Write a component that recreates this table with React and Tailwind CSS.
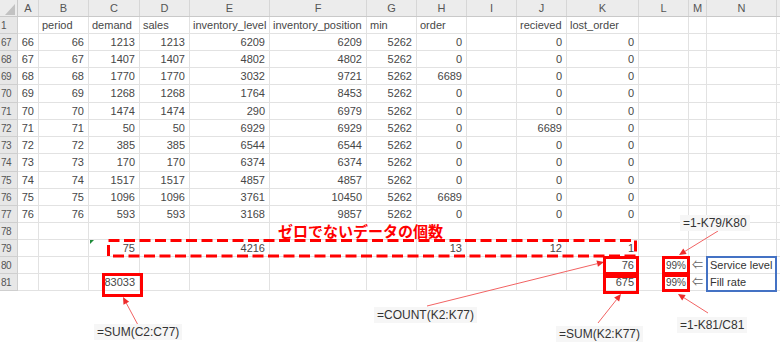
import clsx from 'clsx'

const COLS = [
  { key: 'A', w: 'w-[21px]' },
  { key: 'B', w: 'w-[50px]' },
  { key: 'C', w: 'w-[51px]' },
  { key: 'D', w: 'w-[50px]' },
  { key: 'E', w: 'w-[80px]' },
  { key: 'F', w: 'w-[97px]' },
  { key: 'G', w: 'w-[50px]' },
  { key: 'H', w: 'w-[50px]' },
  { key: 'I', w: 'w-[50px]' },
  { key: 'J', w: 'w-[50px]' },
  { key: 'K', w: 'w-[72px]' },
  { key: 'L', w: 'w-[50px]' },
  { key: 'M', w: 'w-[18px]' },
  { key: 'N', w: 'w-[70px]' },
]

const ROWS = [
  { n: 1, h: 'h-[17px]', c: ['', 'period', 'demand', 'sales', 'inventory_level', 'inventory_position', 'min', 'order', '', 'recieved', 'lost_order', '', '', ''] },
  { n: 67, h: 'h-[17px]', c: [66, 66, 1213, 1213, 6209, 6209, 5262, 0, '', 0, 0, '', '', ''] },
  { n: 68, h: 'h-[17px]', c: [67, 67, 1407, 1407, 4802, 4802, 5262, 0, '', 0, 0, '', '', ''] },
  { n: 69, h: 'h-[17px]', c: [68, 68, 1770, 1770, 3032, 9721, 5262, 6689, '', 0, 0, '', '', ''] },
  { n: 70, h: 'h-[18px]', c: [69, 69, 1268, 1268, 1764, 8453, 5262, 0, '', 0, 0, '', '', ''] },
  { n: 71, h: 'h-[17px]', c: [70, 70, 1474, 1474, 290, 6979, 5262, 0, '', 0, 0, '', '', ''] },
  { n: 72, h: 'h-[17px]', c: [71, 71, 50, 50, 6929, 6929, 5262, 0, '', 6689, 0, '', '', ''] },
  { n: 73, h: 'h-[17px]', c: [72, 72, 385, 385, 6544, 6544, 5262, 0, '', 0, 0, '', '', ''] },
  { n: 74, h: 'h-[18px]', c: [73, 73, 170, 170, 6374, 6374, 5262, 0, '', 0, 0, '', '', ''] },
  { n: 75, h: 'h-[17px]', c: [74, 74, 1517, 1517, 4857, 4857, 5262, 0, '', 0, 0, '', '', ''] },
  { n: 76, h: 'h-[17px]', c: [75, 75, 1096, 1096, 3761, 10450, 5262, 6689, '', 0, 0, '', '', ''] },
  { n: 77, h: 'h-[17px]', c: [76, 76, 593, 593, 3168, 9857, 5262, 0, '', 0, 0, '', '', ''] },
  { n: 78, h: 'h-[17px]', c: ['', '', '', '', '', '', '', '', '', '', '', '', '', ''] },
  { n: 79, h: 'h-[17px]', c: ['', '', 75, '', 4216, '', '', 13, '', 12, 1, '', '', ''] },
  { n: 80, h: 'h-[17px]', c: ['', '', '', '', '', '', '', '', '', '', 76, '99%', '⇐', 'Service level'] },
  { n: 81, h: 'h-[17px]', c: ['', '', 83033, '', '', '', '', '', '', '', 675, '99%', '⇐', 'Fill rate'] },
]

function alignOf(v, i) {
  if (i === 12) return 'justify-center'
  if (/%$/.test(v)) return 'justify-end pr-[2px] text-[10px]'
  if (typeof v === 'number') return 'justify-end pr-[4px]'
  return 'justify-start pl-[3px]'
}

function Arrow({ x1, y1, x2, y2 }) {
  const a = Math.atan2(y2 - y1, x2 - x1)
  const L = 7
  const W = 3.2
  const bx = x2 - L * Math.cos(a)
  const by = y2 - L * Math.sin(a)
  const pts = [
    [x2, y2],
    [bx + W * Math.sin(a), by - W * Math.cos(a)],
    [bx - W * Math.sin(a), by + W * Math.cos(a)],
  ]
  return (
    <g>
      <line x1={x1} y1={y1} x2={bx} y2={by} stroke="#f26363" strokeWidth="1" />
      <polygon points={pts.map((p) => p.join(',')).join(' ')} fill="#ee2b2b" />
    </g>
  )
}

function Label({ className, children }) {
  return (
    <div className={clsx('absolute bg-[#f6f6f6] px-[3px] text-[12px] leading-[16px] text-[#333] whitespace-nowrap', className)}>
      {children}
    </div>
  )
}

function RedBox({ className }) {
  return <div className={clsx('absolute border-[3px] border-[#ff0000]', className)} />
}

export default function App() {
  return (
    <div className="relative w-[780px] h-[347px] overflow-hidden bg-white font-['Liberation_Sans','Noto_Sans_CJK_JP',sans-serif] text-[11px] text-[#474747]">
      {/* sheet */}
      <div className="flex flex-col">
        <div className="flex h-[17px] bg-[#ececec] border-b border-[#c9c9c9]">
          <div className="relative w-[18px] shrink-0 border-r border-[#c9c9c9]">
            <svg className="absolute inset-0" width="18" height="16">
              <polygon points="5,15 15,15 15,4" fill="#c2c2c2" />
            </svg>
          </div>
          {COLS.map((c) => (
            <div key={c.key} className={clsx('shrink-0 flex items-center justify-center border-r border-[#d6d6d6] text-[#555]', c.w)}>
              {c.key}
            </div>
          ))}
          <div className="flex-1" />
        </div>

        {ROWS.map((r) => (
          <div key={r.n} className={clsx('flex', r.h)}>
            <div className="w-[18px] shrink-0 flex items-center justify-start pl-px bg-[#e7e7e7] border-r border-b border-[#cfcfcf] text-[10px] tracking-[-0.5px] text-[#555]">
              {r.n}
            </div>
            {r.c.map((v, i) => (
              <div
                key={i}
                className={clsx(
                  'shrink-0 flex items-center whitespace-nowrap overflow-hidden border-r border-b border-[#e2e2e2]',
                  COLS[i].w,
                  alignOf(v, i),
                  i === 13 && 'text-[#333]',
                  i === 12 && 'text-[#666]'
                )}
              >
                {v}
              </div>
            ))}
            <div className="flex-1 border-b border-[#e2e2e2]" />
          </div>
        ))}
      </div>

      {/* error indicator on C79 */}
      <div className="absolute left-[90px] top-[240px] w-0 h-0 border-t-[4px] border-r-[4px] border-t-[#1f8b3a] border-r-transparent" />

      {/* dashed group and arrows */}
      <svg className="absolute left-0 top-0 pointer-events-none" width="780" height="347">
        <rect x="108.5" y="240.5" width="527" height="15.5" fill="none" stroke="#ff0000" strokeWidth="3" strokeDasharray="11 4.5" />
        <Arrow x1={138} y1={325} x2={123} y2={297} />
        <Arrow x1={427} y1={306} x2={604} y2={262} />
        <Arrow x1={598} y1={323} x2={621} y2={294} />
        <Arrow x1={718} y1={231} x2={679} y2={255} />
        <Arrow x1={708} y1={313} x2={678} y2={294} />
      </svg>

      <div className="absolute left-[276px] top-[223px] bg-white px-[2px] font-['Noto_Sans_CJK_JP',sans-serif] text-[15px] leading-[16px] font-bold text-[#ff0000] whitespace-nowrap">
        ゼロでないデータの個数
      </div>

      <RedBox className="left-[102px] top-[273px] w-[41px] h-[24px]" />
      <RedBox className="left-[603px] top-[256px] w-[36px] h-[19px]" />
      <RedBox className="left-[603px] top-[275px] w-[36px] h-[19px]" />
      <RedBox className="left-[662px] top-[256px] w-[28px] h-[19px]" />
      <RedBox className="left-[662px] top-[274px] w-[28px] h-[18px]" />
      <div className="absolute left-[706px] top-[256px] w-[71px] h-[36px] border-2 border-[#4472c4]" />

      <Label className="left-[94px] top-[324px]">=SUM(C2:C77)</Label>
      <Label className="left-[374px] top-[307px]">=COUNT(K2:K77)</Label>
      <Label className="left-[556px] top-[326px]">=SUM(K2:K77)</Label>
      <Label className="left-[680px] top-[215px]">=1-K79/K80</Label>
      <Label className="left-[677px] top-[317px]">=1-K81/C81</Label>
    </div>
  )
}
